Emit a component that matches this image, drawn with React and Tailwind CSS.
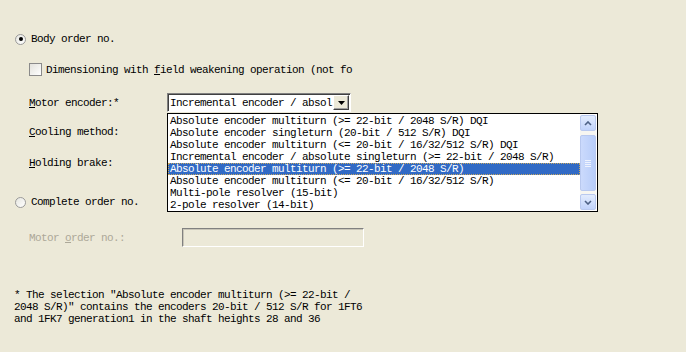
export default function App() {
  const options = [
    "Absolute encoder multiturn (>= 22-bit / 2048 S/R) DQI",
    "Absolute encoder singleturn (20-bit / 512 S/R) DQI",
    "Absolute encoder multiturn (<= 20-bit / 16/32/512 S/R) DQI",
    "Incremental encoder / absolute singleturn (>= 22-bit / 2048 S/R)",
    "Absolute encoder multiturn (>= 22-bit / 2048 S/R)",
    "Absolute encoder multiturn (<= 20-bit / 16/32/512 S/R)",
    "Multi-pole resolver (15-bit)",
    "2-pole resolver (14-bit)",
  ];
  const selected = 4;

  return (
    <div
      className="relative w-[686px] h-[352px] overflow-hidden bg-[#ece9d8] text-black text-[11px] tracking-[-0.6px] leading-[12px] whitespace-pre"
      style={{ fontFamily: '"Liberation Mono", "DejaVu Sans Mono", monospace' }}
    >
      <div className="flex flex-col">
        {/* Body order no. */}
        <div className="mt-[33px] h-[12px] flex items-center pl-[15px]">
          <span className="w-[11px] h-[11px] rounded-full border border-[#9a9a9a] bg-gradient-to-br from-[#e6e6e0] to-white flex items-center justify-center">
            <span className="w-[4px] h-[4px] rounded-full bg-black" />
          </span>
          <span className="ml-[5px]">Body order no.</span>
        </div>

        {/* checkbox */}
        <div className="mt-[18px] h-[13px] flex items-center pl-[29px]">
          <span className="w-[13px] h-[13px] border border-[#8a8a8a] bg-gradient-to-br from-[#e3e2dc] to-white shrink-0" />
          <span className="ml-[4px]">
            Dimensioning with <span className="underline">f</span>ield weakening operation (not fo
          </span>
        </div>

        {/* Motor encoder */}
        <div className="mt-[17px] h-[19px] flex items-center">
          <span className="pl-[29px] w-[167px]">
            <span className="underline">M</span>otor encoder:*
          </span>
          <div className="w-[184px] h-[19px] flex items-center bg-white border border-t-[#808080] border-l-[#808080] border-b-white border-r-white shadow-[inset_1px_1px_0_#404040]">
            <span className="pl-[2px]">Incremental encoder / absol</span>
            <span className="ml-auto mr-[1px] w-[16px] h-[15px] bg-[#ece9d8] border border-t-white border-l-white border-b-[#404040] border-r-[#404040] shadow-[inset_-1px_-1px_0_#a0a0a0] flex items-center justify-center">
              <svg width="7" height="4" viewBox="0 0 7 4">
                <path d="M0 0h7L3.5 4z" fill="#000" />
              </svg>
            </span>
          </div>
        </div>

        {/* Cooling method */}
        <div className="mt-[14px] h-[12px] flex items-center pl-[29px]">
          <span><span className="underline">C</span>ooling method:</span>
        </div>

        {/* Holding brake */}
        <div className="mt-[19px] h-[12px] flex items-center pl-[29px]">
          <span><span className="underline">H</span>olding brake:</span>
        </div>

        {/* Complete order no. */}
        <div className="mt-[27px] h-[12px] flex items-center pl-[15px]">
          <span className="w-[11px] h-[11px] rounded-full border border-[#9a9a9a] bg-gradient-to-br from-[#e6e6e0] to-white" />
          <span className="ml-[5px]">Complete order no.</span>
        </div>

        {/* Motor order no. */}
        <div className="mt-[20px] h-[19px] flex items-center">
          <span className="pl-[29px] w-[182px] text-[#aca899]">
            Motor <span className="underline">o</span>rder no.:
          </span>
          <div className="w-[182px] h-[19px] bg-[#ece9d8] border border-t-[#808080] border-l-[#808080] border-b-white border-r-white shadow-[inset_1px_1px_0_#c8c5b8]" />
        </div>

        {/* footnote */}
        <div className="mt-[42px] pl-[14px] leading-[12px]">
          <div>* The selection "Absolute encoder multiturn (&gt;= 22-bit /</div>
          <div>2048 S/R)" contains the encoders 20-bit / 512 S/R for 1FT6</div>
          <div>and 1FK7 generation1 in the shaft heights 28 and 36</div>
        </div>
      </div>

      {/* open dropdown list */}
      <div className="absolute left-[167px] top-[113px] w-[431px] h-[99px] bg-white border border-black flex">
        <div className="flex-1 flex flex-col pt-[1px] overflow-hidden">
          {options.map((o, i) => (
            <div
              key={i}
              className={
                i === selected
                  ? "h-[12px] pl-[2px] bg-[#316ac5] text-white outline outline-1 outline-dotted outline-offset-[-1px] outline-[#c8a860]"
                  : "h-[12px] pl-[2px]"
              }
            >
              {o}
            </div>
          ))}
        </div>
        <div className="w-[16px] my-[1px] mr-[1px] flex flex-col bg-[#f7f6f1]">
          <div className="h-[16px] rounded-[2px] border border-[#b9c9ef] bg-gradient-to-b from-[#e3ecfd] to-[#c1d3fb] flex items-center justify-center">
            <svg width="8" height="5" viewBox="0 0 8 5">
              <path d="M1 4L4 1l3 3" stroke="#4d6185" strokeWidth="1.6" fill="none" />
            </svg>
          </div>
          <div className="mt-[4px] h-[56px] rounded-[2px] border border-[#b9c9ef] bg-gradient-to-r from-[#cbdafc] to-[#b8cdf9] flex flex-col items-center justify-center gap-[1px]">
            <span className="w-[6px] h-[1px] bg-[#eef3fe]" />
            <span className="w-[6px] h-[1px] bg-[#eef3fe]" />
            <span className="w-[6px] h-[1px] bg-[#eef3fe]" />
            <span className="w-[6px] h-[1px] bg-[#eef3fe]" />
          </div>
          <div className="mt-auto h-[16px] rounded-[2px] border border-[#b9c9ef] bg-gradient-to-b from-[#e3ecfd] to-[#c1d3fb] flex items-center justify-center">
            <svg width="8" height="5" viewBox="0 0 8 5">
              <path d="M1 1l3 3 3-3" stroke="#4d6185" strokeWidth="1.6" fill="none" />
            </svg>
          </div>
        </div>
      </div>
    </div>
  );
}
